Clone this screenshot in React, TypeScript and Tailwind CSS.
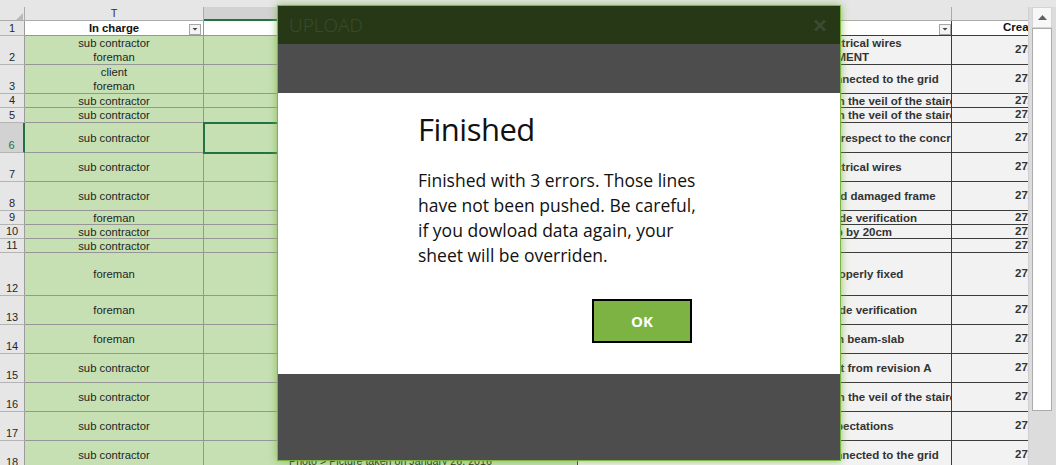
import React from "react";

type Row = { n: number; h: number; who: string[]; desc: string[]; photo?: string };

const H: Record<number, string> = {
  14: "h-[14px]",
  15: "h-[15px]",
  29: "h-[29px]",
  30: "h-[30px]",
  43: "h-[43px]",
};

const ROWS: Row[] = [
  { n: 2, h: 29, who: ["sub contractor", "foreman"], desc: ["Level 2 - Apartment 24 - kitchen - check the electrical wires", "Ref.: CCTP LOT 11.2 - (v2) ELECTRICAL EQUIPMENT"] },
  { n: 3, h: 29, who: ["client", "foreman"], desc: ["Level 1 - Apartment 12 - Electrical plugs not connected to the grid"] },
  { n: 4, h: 14, who: ["sub contractor"], desc: ["Level 3 - Apartment 3.1 - Entrance Hall - Crack in the veil of the staircase"] },
  { n: 5, h: 15, who: ["sub contractor"], desc: ["Level 3 - Apartment 3.5 - Entrance Hall - Crack in the veil of the staircase"] },
  { n: 6, h: 30, who: ["sub contractor"], desc: ["Level -1 - Car park - Shear wall not aligned with respect to the concrete"] },
  { n: 7, h: 29, who: ["sub contractor"], desc: ["Level 2 - Apartment 22 - kitchen - check the electrical wires"] },
  { n: 8, h: 29, who: ["sub contractor"], desc: ["Level 1 - Apartment 14 - Door - broken glass, and damaged frame"] },
  { n: 9, h: 14, who: ["foreman"], desc: ["Level 2 - Apartment 21 - Balcony - railings outside verification"] },
  { n: 10, h: 14, who: ["sub contractor"], desc: ["Level 3 - Apartment 33 - balcony - lower the slab by 20cm"] },
  { n: 11, h: 14, who: ["sub contractor"], desc: [""] },
  { n: 12, h: 43, who: ["foreman"], desc: ["Level 4 - Apartment 41 - Bathroom - Taps not properly fixed"] },
  { n: 13, h: 29, who: ["foreman"], desc: ["Level 2 - Apartment 26 - Balcony - railings outside verification"] },
  { n: 14, h: 29, who: ["foreman"], desc: ["Level 2 - Apartment 23 - Living Room - Cracks in beam-slab"] },
  { n: 15, h: 29, who: ["sub contractor"], desc: ["Level 1 - Apartment 1.1 - Partition Walls different from revision A"] },
  { n: 16, h: 29, who: ["sub contractor"], desc: ["Level 3 - Apartment 3.4 - Entrance Hall - Crack in the veil of the staircase"] },
  { n: 17, h: 29, who: ["sub contractor"], desc: ["Level 3 - Apartment 32 - Finishes don't meet expectations"] },
  { n: 18, h: 29, who: ["sub contractor"], desc: ["Level 1 - Apartment 13 - Electrical plugs not connected to the grid"], photo: "Photo > Picture taken on January 26, 2016" },
];

function FilterBtn({ pos }: { pos: string }) {
  return (
    <div className={`absolute top-[3px] flex h-[11px] w-[12px] items-center justify-center border border-[#a6a6a6] bg-[#f3f3f3] ${pos}`}>
      <svg width="8" height="5" viewBox="0 0 8 5">
        <polygon points="1.5,1 6.5,1 4,3.5" fill="#444" />
      </svg>
    </div>
  );
}

function SheetRow({ r }: { r: Row }) {
  const sel = r.n === 6;
  return (
    <div className={`flex shrink-0 ${H[r.h]}`}>
      <div
        className={`flex w-[25px] shrink-0 items-end justify-center border-b border-b-[#b4b4b4] pb-[1px] text-[11px] leading-[12px] ${
          sel ? "border-r-2 border-r-[#217346] bg-[#d2d2d2] text-[#217346]" : "border-r border-r-[#9b9b9b] bg-[#e6e6e6] text-[#262626]"
        }`}
      >
        {r.n}
      </div>
      <div className="flex w-[179px] shrink-0 flex-col items-center justify-center border-r border-b border-[#969696] bg-[#c6e0b4] text-[11.3px] leading-[14px] text-[#1f1f1f]">
        {r.who.map((w) => (
          <span key={w}>{w}</span>
        ))}
      </div>
      <div
        className={`flex w-[374px] shrink-0 items-end justify-center overflow-hidden border-r border-b border-r-[#3c3c3c] border-b-[#969696] bg-[#c6e0b4] pb-[1px] text-[10.7px] leading-[13px] whitespace-nowrap text-[#1f1f1f] ${
          sel ? "relative z-10 outline-2 -outline-offset-1 outline-[#217346]" : ""
        }`}
      >
        {r.photo}
      </div>
      <div className="flex w-[374px] shrink-0 flex-col justify-center overflow-hidden border-r border-b border-[#3c3c3c] bg-[#f2f2f2] pl-[2px] text-[11.5px] font-bold leading-[14px] whitespace-nowrap text-[#333]">
        {r.desc.map((d, i) => (
          <span key={i}>{d}</span>
        ))}
      </div>
      <div className="flex w-[200px] shrink-0 items-center border-b border-[#3c3c3c] bg-[#f2f2f2] pl-[63px] text-[11.5px] font-bold text-[#333]">
        27/01/2016
      </div>
    </div>
  );
}

export default function App() {
  return (
    <div className="relative flex h-[465px] w-[1056px] overflow-hidden bg-[#e6e6e6] font-['Liberation_Sans',Arial,sans-serif]">
      {/* Sheet */}
      <div className="flex w-[1028px] shrink-0 flex-col overflow-hidden">
        <div className="h-[7px] shrink-0" />
        {/* column letters */}
        <div className="flex h-[14px] shrink-0 text-[11px] leading-[13px] text-[#333]">
          <div className="flex w-[25px] shrink-0 items-end justify-end border-r border-b border-[#ababab] pr-[1px]">
            <svg width="7" height="7" viewBox="0 0 7 7">
              <polygon points="7,0 7,7 0,7" fill="#b9b9b9" />
            </svg>
          </div>
          <div className="flex w-[179px] shrink-0 justify-center border-r border-b border-[#ababab]">T</div>
          <div className="flex w-[374px] shrink-0 justify-center border-r border-b-2 border-r-[#ababab] border-b-[#217346] bg-[#d2d2d2]">U</div>
          <div className="flex w-[374px] shrink-0 justify-center border-r border-b border-[#ababab]">V</div>
          <div className="flex w-[200px] shrink-0 justify-center border-b border-[#ababab]">W</div>
        </div>
        {/* row 1 : table headers */}
        <div className="flex h-[15px] shrink-0">
          <div className="flex w-[25px] shrink-0 items-end justify-center border-r border-b border-r-[#9b9b9b] border-b-[#b4b4b4] bg-[#e6e6e6] pb-[1px] text-[11px] leading-[12px] text-[#262626]">
            1
          </div>
          <div className="relative flex w-[179px] shrink-0 items-center justify-center border-r border-b border-[#969696] bg-white text-[11.3px] font-bold text-[#111]">
            In charge
            <FilterBtn pos="right-[2px]" />
          </div>
          <div className="flex w-[374px] shrink-0 items-center justify-center border-r border-b border-r-[#3c3c3c] border-b-[#969696] bg-white text-[11.3px] font-bold text-[#111]">
            Comments
          </div>
          <div className="relative flex w-[374px] shrink-0 items-center justify-center border-r border-b border-[#3c3c3c] bg-white text-[11.5px] font-bold text-[#111]">
            Description
            <FilterBtn pos="right-[0px]" />
          </div>
          <div className="flex w-[200px] shrink-0 items-center border-b border-[#3c3c3c] bg-white pl-[51px] text-[11.5px] font-bold text-[#111]">
            Created
          </div>
        </div>
        {ROWS.map((r) => (
          <SheetRow key={r.n} r={r} />
        ))}
      </div>

      {/* Vertical scrollbar */}
      <div className="flex w-[28px] shrink-0 flex-col">
        <div className="h-[7px] shrink-0 bg-[#e6e6e6]" />
        <div className="flex flex-1 flex-col border-l border-[#cfcfcf] bg-[#dcdcdc] pr-[4px] pl-[3px]">
          <div className="flex h-[21px] shrink-0 items-center justify-center border border-[#d4d4d4] bg-[#f7f7f7]">
            <svg width="9" height="5" viewBox="0 0 9 5">
              <polygon points="4.5,0 9,5 0,5" fill="#606060" />
            </svg>
          </div>
          <div className="h-[383px] shrink-0 border border-[#ababab] bg-white" />
        </div>
      </div>

      {/* Upload dialog */}
      <div className="absolute top-[5px] left-[277px] z-20 flex h-[456px] w-[564px] flex-col border border-[#7cb342] font-['Open_Sans',sans-serif] shadow-[0_0_8px_rgba(124,179,66,0.8)]">
        <div className="flex h-[38px] shrink-0 items-center justify-between bg-[#263815] pr-[13px] pl-[11px]">
          <span className="text-[19px] leading-none font-light text-[#3d4c30]">UPLOAD</span>
          <svg width="14" height="13" viewBox="0 0 14 13">
            <path d="M2 1.5 L12 11.5 M12 1.5 L2 11.5" stroke="#3b4930" strokeWidth="3" />
          </svg>
        </div>
        <div className="h-[49px] shrink-0 bg-[#4d4d4d]" />
        <div className="h-[281px] shrink-0 bg-white pt-[16px] pl-[140px]">
          <div className="w-[274px]">
            <h1 className="text-[31px] leading-[40px] tracking-[-0.5px] text-[#111]">Finished</h1>
            <p className="mt-[19px] text-[17.5px] leading-[25px] whitespace-nowrap text-[#111]">
              Finished with 3 errors. Those lines
              <br />
              have not been pushed. Be careful,
              <br />
              if you dowload data again, your
              <br />
              sheet will be overriden.
            </p>
            <div className="mt-[31px] flex justify-end">
              <button className="flex h-[44px] w-[100px] items-center justify-center border-2 border-black bg-[#7db343] text-[15px] font-bold text-white">
                OK
              </button>
            </div>
          </div>
        </div>
        <div className="flex-1 bg-[#4d4d4d]" />
      </div>
    </div>
  );
}
